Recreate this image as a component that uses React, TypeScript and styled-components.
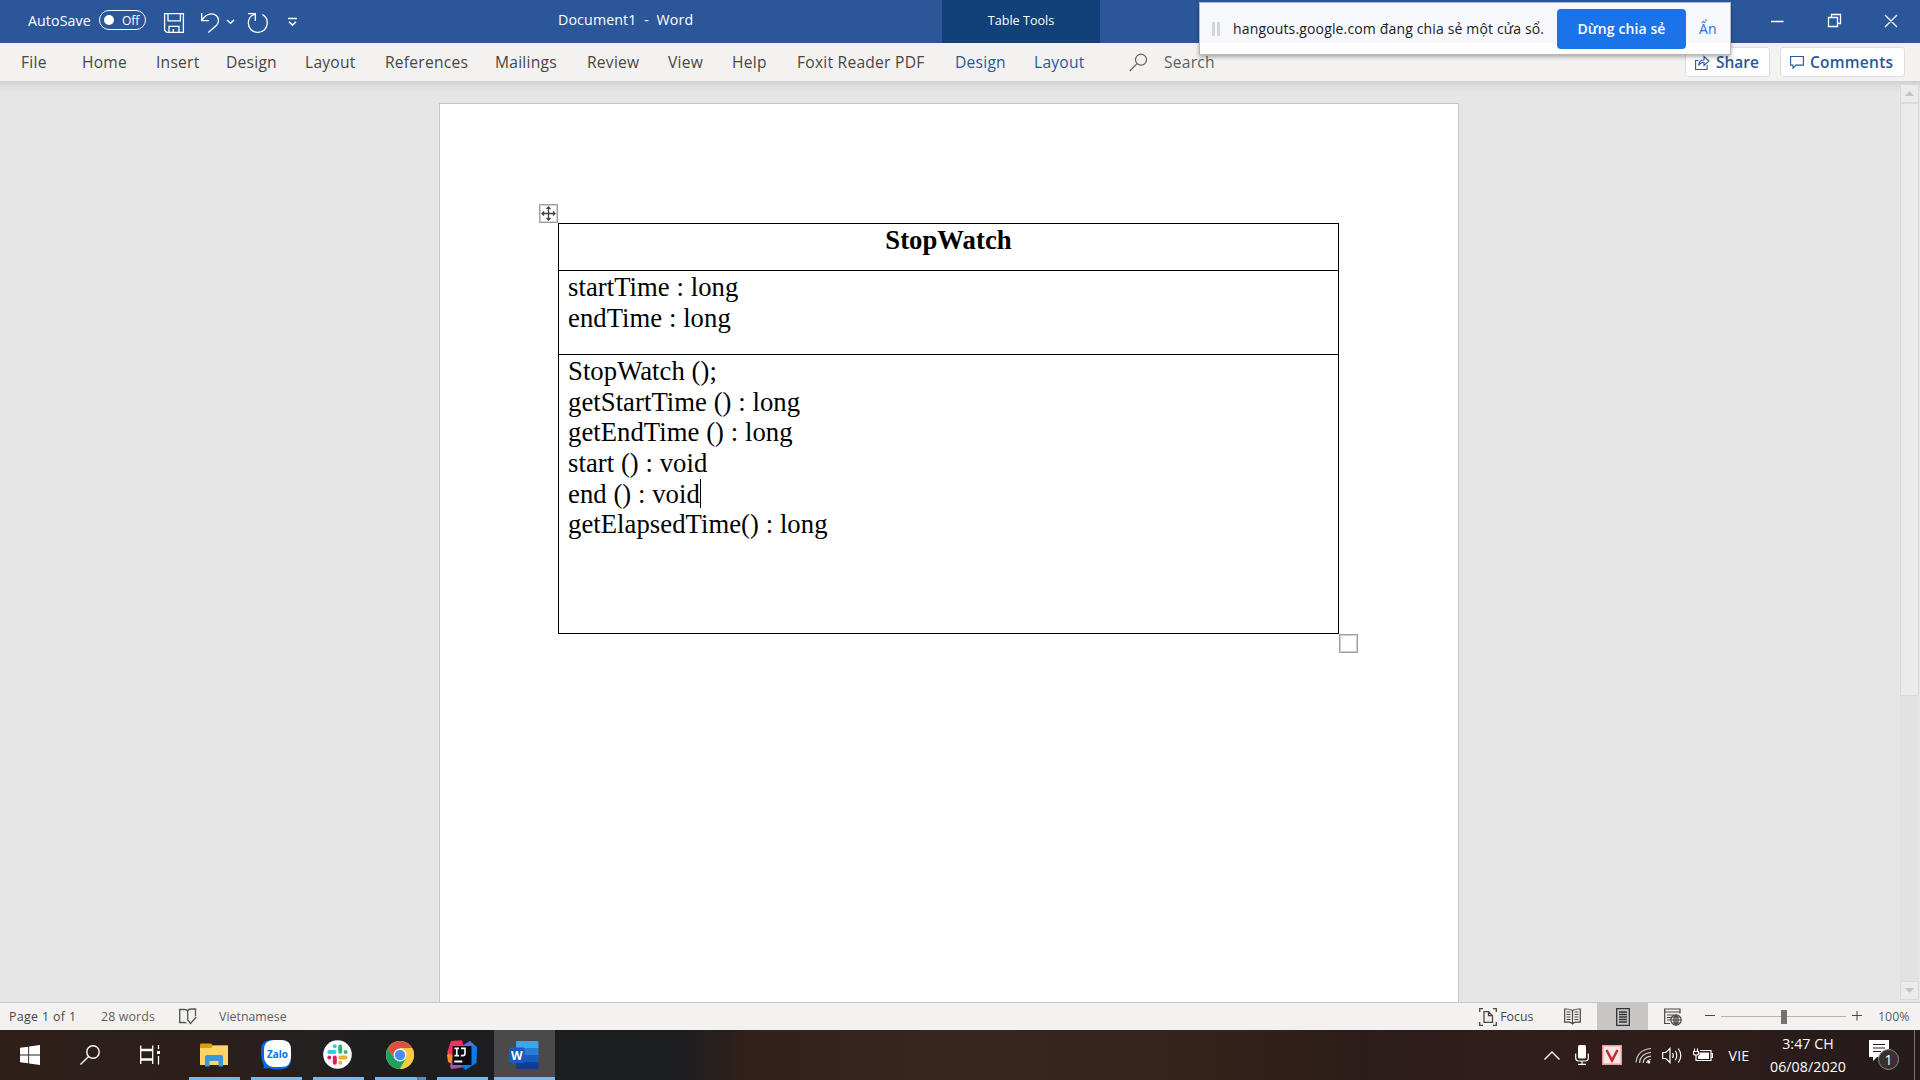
import React from "react";
import styled, { createGlobalStyle } from "styled-components";

const ui = `"Open Sans", "Noto Sans", sans-serif`;

const Global = createGlobalStyle`
  *, *::before, *::after { box-sizing: border-box; }
  body { margin: 0; overflow: hidden; background: #e6e6e6; }
  svg { display: block; flex: none; }
`;

const Screen = styled.div`
  position: relative;
  display: flex;
  flex-direction: column;
  width: 1920px;
  height: 1080px;
  overflow: hidden;
  font-family: ${ui};
  white-space: pre;
`;

const TitleBar = styled.header`
  display: flex;
  height: 43px;
  flex: none;
  background: #2b579a;
  color: #fff;
`;

const Text = styled.span<{ $size: number; $spacing?: number; $color?: string; $weight?: number }>`
  font-size: ${(p) => p.$size}px;
  letter-spacing: ${(p) => p.$spacing ?? 0}px;
  color: ${(p) => p.$color ?? "inherit"};
  font-weight: ${(p) => p.$weight ?? 400};
`;

const QuickAccess = styled.div`
  display: flex;
  align-items: center;
  width: 558px;
  padding: 0 0 1px 28px;
`;

const AutoSaveLabel = styled.div`
  width: 71px;
  padding-bottom: 2px;
`;

const Toggle = styled.div`
  display: flex;
  align-items: center;
  width: 47px;
  height: 20px;
  margin-top: -2px;
  padding-left: 4px;
  gap: 8px;
  border: 1px solid #fff;
  border-radius: 10px;
`;

const Knob = styled.i`
  width: 10px;
  height: 10px;
  border-radius: 50%;
  background: #fff;
`;

const QuickIcons = styled.div`
  display: flex;
  margin: 3px 0 0 17px;
`;

const DocTitle = styled.div`
  width: 384px;
  height: 39px;
  line-height: 39px;
`;

const ContextTab = styled.div`
  width: 158px;
  background: #124078;
  text-align: center;
  line-height: 38px;
`;

const WindowButtons = styled.div`
  display: flex;
  margin-left: 668px;
`;

const Ribbon = styled.nav`
  display: flex;
  align-items: center;
  flex: none;
  height: 38px;
  padding-left: 21px;
  background: #f3f2f1;
`;

const Tab = styled.div<{ $w: number; $blue?: boolean; $muted?: boolean }>`
  width: ${(p) => p.$w}px;
  flex: none;
  font-size: 15.6px;
  line-height: 38px;
  letter-spacing: 0.24px;
  color: ${(p) => (p.$blue ? "#2b579a" : p.$muted ? "#605e5c" : "#484644")};
`;

const RibbonButton = styled.div<{ $w: number }>`
  display: flex;
  align-items: center;
  gap: 6px;
  width: ${(p) => p.$w}px;
  height: 30px;
  margin-right: 10px;
  padding-left: 9px;
  border: 1px solid #e1dfdd;
  border-radius: 3px;
  background: #fff;
`;

const Workspace = styled.main`
  display: flex;
  flex: none;
  height: 921px;
  padding-left: 439px;
  background: linear-gradient(#cfcfcf, #e0e0e0 6px, #e6e6e6 12px);
`;

const Page = styled.article`
  width: 1020px;
  margin-top: 22px;
  padding: 119px 0 0 118px;
  border: 1px solid #c6c6c6;
  border-bottom: 0;
  background: #fff;
`;

const ClassTable = styled.section`
  position: relative;
  display: grid;
  grid-template-rows: 46px 83px 278px;
  row-gap: 1px;
  width: 781px;
  height: 411px;
  border: 1px solid #000;
  background: #000;
  font: 26.67px/30.67px "Liberation Serif", "Times New Roman", serif;
  letter-spacing: 0.06px;
  color: #000;
`;

const Cell = styled.div<{ $center?: boolean }>`
  padding: ${(p) => (p.$center ? "1px 0 0" : "1px 0 0 9px")};
  background: #fff;
  text-align: ${(p) => (p.$center ? "center" : "left")};
  font-weight: ${(p) => (p.$center ? 700 : 400)};
`;

const Line = styled.div`
  display: flex;
  height: 30.67px;
`;

const Caret = styled.i`
  width: 1px;
  height: 29px;
  background: #000;
`;

const MoveHandle = styled.div`
  position: absolute;
  left: -20px;
  top: -20px;
  width: 19px;
  height: 19px;
  border: 1px solid #a0a0a0;
  box-shadow: inset 0 0 0 1px #d0d0d0;
  background: #fff;
`;

const ResizeHandle = styled.div`
  position: absolute;
  left: 780px;
  top: 410px;
  width: 19px;
  height: 19px;
  border: 1px solid #a0a0a0;
  box-shadow: inset 0 0 0 1px #d0d0d0;
  background: #fff;
`;

const ScrollTrack = styled.aside`
  display: flex;
  flex-direction: column;
  width: 19px;
  height: 916px;
  margin: 3px 1px 0 auto;
  background: #e2e2e2;
`;

const ScrollPart = styled.div<{ $h: number; $push?: boolean }>`
  display: flex;
  align-items: center;
  justify-content: center;
  flex: none;
  height: ${(p) => p.$h}px;
  margin-top: ${(p) => (p.$push ? "auto" : 0)};
  border: 1px solid #dadada;
  background: #ebebeb;
`;

const StatusBar = styled.footer`
  display: flex;
  align-items: center;
  flex: none;
  height: 28px;
  padding-left: 9px;
  border-top: 1px solid #c8c6c4;
  background: #f3f2f1;
  color: #484644;
`;

const StatusItem = styled.div<{ $w: number }>`
  display: flex;
  align-items: center;
  flex: none;
  width: ${(p) => p.$w}px;
`;

const ViewButton = styled.div<{ $active?: boolean; $w?: number }>`
  display: flex;
  align-items: center;
  justify-content: center;
  flex: none;
  width: ${(p) => p.$w ?? 50}px;
  height: 27px;
  background: ${(p) => (p.$active ? "#c8c6c4" : "transparent")};
`;

const ZoomGroup = styled.div`
  display: flex;
  align-items: center;
  flex: none;
  margin: 0 16px 0 7px;
`;

const ZoomRail = styled.div`
  display: flex;
  align-items: center;
  flex: none;
  width: 125px;
  height: 1px;
  margin: 0 6px;
  padding-left: 60px;
  background: #b5b3b1;
`;

const ZoomThumb = styled.i`
  width: 6px;
  height: 14px;
  background: #767472;
`;

const Taskbar = styled.footer`
  display: flex;
  flex: none;
  height: 50px;
  background: linear-gradient(90deg, #2e1f19 0, #2c1f1a 200px, #242020 300px, #1e1e1f 380px, #1d1e20 680px, #33201b 755px, #38261f 950px, #36231c 1150px, #2f1f19 1330px, #2b1c1b 1360px, #321e1c 1520px, #2c1c1a 1750px, #241c1b 1920px);
  color: #fff;
`;

const SystemButton = styled.div`
  display: flex;
  align-items: center;
  justify-content: center;
  width: 60px;
`;

const Apps = styled.div`
  display: flex;
  gap: 11px;
  padding-left: 9px;
`;

const AppButton = styled.div<{ $active?: boolean; $stack?: boolean }>`
  display: flex;
  align-items: center;
  justify-content: center;
  flex: none;
  width: ${(p) => (p.$active ? 61 : 51)}px;
  margin-left: ${(p) => (p.$active ? -5 : 0)}px;
  padding: 2px 2px 0 0;
  border-bottom: 3px solid #76b9ed;
  border-image: ${(p) => (p.$stack ? "linear-gradient(90deg, #76b9ed 40px, #4b7596 40px, #5c8db5 42px) 3" : "none")};
  background: ${(p) => (p.$active ? "#4a4a4b" : "transparent")};
`;

const Tray = styled.div`
  display: flex;
  align-items: center;
  margin-left: auto;
`;

const TrayItem = styled.div<{ $w: number }>`
  display: flex;
  align-items: center;
  justify-content: center;
  flex: none;
  width: ${(p) => p.$w}px;
  height: 50px;
`;

const Clock = styled.div`
  width: 90px;
  margin-left: 4px;
  text-align: center;
  line-height: 23px;
`;

const PeekEdge = styled.div`
  width: 6px;
  height: 50px;
  border-left: 1px solid #767170;
`;

const SharePopup = styled.div`
  position: absolute;
  left: 1199px;
  top: 2px;
  display: flex;
  align-items: center;
  width: 532px;
  height: 53px;
  padding-left: 12px;
  border: 1px solid #b4b9c2;
  border-top-color: #a9bad6;
  background: linear-gradient(#f6f8fc 40px, #fefefe 40px);
  box-shadow: 0 2px 4px rgba(0, 0, 0, 0.3);
  color: #202124;
`;

const Grip = styled.div`
  display: flex;
  gap: 2px;
  width: 21px;
  i { width: 3px; height: 14px; background: #d2d4d8; }
`;

const Message = styled.div`
  width: 324px;
  padding-bottom: 1px;
`;

const StopButton = styled.div`
  width: 129px;
  height: 40px;
  border-radius: 4px;
  background: #1a73e8;
  line-height: 39px;
  text-align: center;
`;

const HideLink = styled.div`
  margin-left: 13px;
  padding-bottom: 1px;
`;

type TabInfo = { label: string; width: number; blue?: boolean };

const tabs: TabInfo[] = [
  { label: "File", width: 61 },
  { label: "Home", width: 74 },
  { label: "Insert", width: 70 },
  { label: "Design", width: 79 },
  { label: "Layout", width: 80 },
  { label: "References", width: 110 },
  { label: "Mailings", width: 92 },
  { label: "Review", width: 81 },
  { label: "View", width: 64 },
  { label: "Help", width: 65 },
  { label: "Foxit Reader PDF", width: 158 },
  { label: "Design", width: 79, blue: true },
  { label: "Layout", width: 95, blue: true },
];

const QuickAccessIcons = () => (
  <svg width="140" height="24" viewBox="163 11 140 24" fill="none" stroke="#fff" strokeWidth="1.3">
    <path d="M164.600 13.600h18.800v18.800h-16.600l-2.200-2.200zM168 13.600v7.200h12.400v-7.200M169 32.400v-6h10v6M173.200 29v3.400" />
    <path d="M201.700 13v7.600h7.500M202 20.200c2-3.400 5-6.400 9.300-6.400 4.300 0 7.200 3.100 7.200 6.800 0 2-.8 3.500-2.200 5l-8 7" />
    <path d="m227 20 3.500 3.300 3.500-3.300" strokeWidth="1.5" />
    <path d="M248 13.700h7.300v7.400M254.700 14.300c-4 1-6.400 4.700-6.400 8.700 0 5.300 4.200 9.400 9.500 9.400s9.500-4.100 9.500-9.400c0-3.800-1.900-6.900-5-8.500" />
    <path d="M288 18.600h9M289 21.800l3.500 3.300 3.500-3.300" strokeWidth="1.5" />
  </svg>
);

const WindowIcons = () => (
  <svg width="140" height="43" viewBox="1768 0 140 43" fill="none" stroke="#fff" strokeWidth="1.3">
    <path d="M1771 21.500h12.500M1828.500 17.500h9v9h-9zM1831.500 17.500v-3h9v9h-3M1885 15l12 12M1897 15l-12 12" />
  </svg>
);

const StartIcon = () => (
  <svg width="20" height="20" viewBox="0 0 20 20" fill="#fff">
    <path d="M0 2.800 8.200 1.700v7.900H0zM9.100 1.500 20 0v9.600H9.100zM0 10.400h8.200v7.900L0 17.200zM9.100 10.400H20V20L9.100 18.500z" />
  </svg>
);

const ExplorerIcon = () => (
  <svg width="28" height="24" viewBox="0 0 28 24">
    <path d="M0 1.500Q0 .5 1 .5h10l2 2h14q1 0 1 1V22H0z" fill="#e09c0c" />
    <path d="M0 5h11l2.500-2.500H28V22H0z" fill="#ffd563" />
    <path d="M5 23.500V14q0-2 2-2h14q2 0 2 2v9.500h-4.500V18h-9v5.500z" fill="#3a96dd" />
  </svg>
);

const ZaloIcon = () => (
  <svg width="30" height="30" viewBox="0 0 30 30">
    <path d="M10 0h10q10 0 10 10v9q0 10.500-12 10.500-6 .5-10-1.500l-5 .5q-1-.5 0-3Q0 21 0 10 0 0 10 0z" fill="#0866e8" />
    <path d="M13 0h8q9 0 9 10v7q0 10-10 10h-7q-4 0-6-2-4-3-4-9v-6Q3 0 13 0z" fill="#fff" />
    <text x="16.500" y="17.500" textAnchor="middle" fontFamily={ui} fontSize="10.500" fontWeight="700" fill="#0872e8" textLength="21" lengthAdjust="spacingAndGlyphs">Zalo</text>
  </svg>
);

const SlackIcon = () => (
  <svg width="29" height="29" viewBox="0 0 29 29">
    <circle cx="14.500" cy="14.500" r="14.300" fill="#fff" />
    <g strokeWidth="4" strokeLinecap="round">
      <path d="M6.300 12h5.200M11.800 6.300h.01" stroke="#36c5f0" />
      <path d="M17.200 6.500v5.300M22.600 12h.01" stroke="#2eb67d" />
      <path d="M17.300 17.400h5.300M17.300 22.700h.01" stroke="#ecb22e" />
      <path d="M11.800 17.400v5.300M6.300 17.400h.01" stroke="#e01e5a" />
    </g>
  </svg>
);

const ChromeIcon = () => (
  <svg width="28" height="28" viewBox="0 0 28 28">
    <circle cx="14" cy="14" r="14" fill="#fdca42" />
    <path d="M1.900 7A14 14 0 0 1 26.100 7H14l-6 10.500z" fill="#dd5144" />
    <path d="M1.900 7A14 14 0 0 0 14 28l6-10.500H8z" fill="#1ca261" />
    <path d="M26.100 7H14v7l6 3.500L14 28A14 14 0 0 0 26.100 7z" fill="#fdca42" />
    <circle cx="14" cy="14" r="6.400" fill="#fff" />
    <circle cx="14" cy="14" r="5.200" fill="#4a8cf6" />
  </svg>
);

const IntellijIcon = () => (
  <svg width="30" height="30" viewBox="0 0 30 30">
    <path d="m0 15 3-5 8 12-4 3-6-3z" fill="#f98a2b" />
    <path d="m4 1 11-.7L17 9 7 16 0 13z" fill="#fe2d63" />
    <path d="m6 17 12 10-14 2-1-3z" fill="#a857a7" />
    <path d="m15 6 8-5 7 6-.5 16-11 7-6-6z" fill="#0b7bf2" />
    <path d="m15 6 8-5 4 4-6 7z" fill="#5f6adb" />
    <path d="M5.500 6h19v19h-19z" fill="#0c0c0e" />
    <path d="M7.500 8.400h4.500M9.750 8.400v7.200M7.500 15.600h4.500M14 8.400h4v4.800q0 2.400-2.400 2.400h-1.800" fill="none" stroke="#fff" strokeWidth="1.6" />
    <path d="M7.300 20.500h8V22.500h-8z" fill="#fff" />
  </svg>
);

const WordIcon = () => (
  <svg width="30" height="28" viewBox="0 0 30 28">
    <path d="M7 1q0-1 1-1h20q1.500 0 1.500 1.500V7H7z" fill="#41a5ee" />
    <path d="M7 7h22.500v7H7z" fill="#2b7cd3" />
    <path d="M7 14h22.500v7H7z" fill="#185abd" />
    <path d="M7 21h22.500v5.500Q29.500 28 28 28H8q-1 0-1-1z" fill="#103f91" />
    <rect x="0" y="6.500" width="15.500" height="15.500" rx="1.300" fill="#185abd" />
    <text x="7.700" y="18.500" textAnchor="middle" fontFamily={ui} fontSize="12" fontWeight="700" fill="#fff">W</text>
  </svg>
);

export default function App() {
  return (
    <>
      <Global />
      <Screen>
        <TitleBar>
          <QuickAccess>
            <AutoSaveLabel><Text $size={14.2} $spacing={0.1}>AutoSave</Text></AutoSaveLabel>
            <Toggle><Knob /><Text $size={12}>Off</Text></Toggle>
            <QuickIcons><QuickAccessIcons /></QuickIcons>
          </QuickAccess>
          <DocTitle><Text $size={14.2} $spacing={0.14}>Document1  -  Word</Text></DocTitle>
          <ContextTab><Text $size={12.6}>Table Tools</Text></ContextTab>
          <WindowButtons><WindowIcons /></WindowButtons>
        </TitleBar>

        <Ribbon>
          {tabs.map((tab, i) => (
            <Tab key={i} $w={tab.width} $blue={tab.blue}>{tab.label}</Tab>
          ))}
          <StatusItem $w={35}>
            <svg width="19" height="19" viewBox="0 0 19 19" fill="none" stroke="#605e5c" strokeWidth="1.2">
              <circle cx="12" cy="6.700" r="5.500" /><path d="M8 10.700.8 18" />
            </svg>
          </StatusItem>
          <Tab $w={521} $muted>Search</Tab>
          <RibbonButton $w={85}>
            <svg width="15" height="15" viewBox="0 0 15 15" fill="none" stroke="#2b579a" strokeWidth="1.1">
              <path d="M3.500 5.500H.6v9h11.500V10M3.500 10.500c.5-4 3-5.500 5.500-5.500V1.500l5 4.500-5 4.500V7.300c-2.500 0-4 1-5.500 3.200z" />
            </svg>
            <Text $size={15.5} $weight={600} $color="#2b579a">Share</Text>
          </RibbonButton>
          <RibbonButton $w={125}>
            <svg width="14" height="15" viewBox="0 0 14 15" fill="none" stroke="#2b579a" strokeWidth="1.1">
              <path d="M.6 1.500h12.800v8.600H6l-3 3v-3H.6z" />
            </svg>
            <Text $size={15.5} $spacing={0.25} $weight={600} $color="#2b579a">Comments</Text>
          </RibbonButton>
        </Ribbon>

        <Workspace>
          <Page>
            <ClassTable>
              <Cell $center>StopWatch</Cell>
              <Cell><Line>startTime : long</Line><Line>endTime : long</Line></Cell>
              <Cell>
                <Line>StopWatch ();</Line>
                <Line>getStartTime () : long</Line>
                <Line>getEndTime () : long</Line>
                <Line>start () : void</Line>
                <Line>end () : void<Caret /></Line>
                <Line>getElapsedTime() : long</Line>
              </Cell>
              <MoveHandle>
                <svg width="17" height="17" viewBox="0 0 17 17" fill="none" stroke="#444" strokeWidth="1.3">
                  <path d="M8.500 2v13M2 8.500h13M6.500 4l2-2 2 2M6.500 13l2 2 2-2M4 6.500l-2 2 2 2M13 6.500l2 2-2 2" />
                </svg>
              </MoveHandle>
              <ResizeHandle />
            </ClassTable>
          </Page>
          <ScrollTrack>
            <ScrollPart $h={19}><svg width="9" height="5"><path d="M0 5 4.500 0 9 5z" fill="#c4c4c4" /></svg></ScrollPart>
            <ScrollPart $h={593} />
            <ScrollPart $h={19} $push><svg width="9" height="5"><path d="M0 0h9L4.500 5z" fill="#c4c4c4" /></svg></ScrollPart>
          </ScrollTrack>
        </Workspace>

        <StatusBar>
          <StatusItem $w={92}><Text $size={12.4} $spacing={0.35}>Page 1 of 1</Text></StatusItem>
          <StatusItem $w={78}><Text $size={12.4} $spacing={0.12} $color="#605e5c">28 words</Text></StatusItem>
          <StatusItem $w={40}>
            <svg width="18" height="17" viewBox="0 0 18 17" fill="none" stroke="#555" strokeWidth="1.3">
              <path d="M6 14.500H.7V1.500h4.500q3 0 3.500 1.500Q9.500 1 12 1h4.500v7M8.700 3v8M6 14.500l1.500.8M8 11l3.500 4.500L17.300 9" />
            </svg>
          </StatusItem>
          <StatusItem $w={1260}><Text $size={12.4} $color="#605e5c">Vietnamese</Text></StatusItem>
          <StatusItem $w={69}>
            <svg width="18" height="18" viewBox="0 0 18 18" fill="none" stroke="#484644" strokeWidth="1.3">
              <path d="M.7 4V.7H4M14 .7h3.300V4M.7 14v3.300H4M14 17.300h3.300V14M5 3.700h4.500l4 4v6.600H5zM9.500 3.700v4h4" />
            </svg>
            <Text $size={12.4}> Focus</Text>
          </StatusItem>
          <ViewButton $w={49}>
            <svg width="17" height="17" viewBox="0 0 17 17" fill="none" stroke="#484644" strokeWidth="1.2">
              <path d="M8.500 2.500v14M8.500 2.500Q6 .8 .7 1v13.200h5l2.800 1.300 2.800-1.300h5V1Q11 .8 8.500 2.500zM2.500 4h4M2.500 6.500h4M2.500 9h4M2.500 11.500h4M10.500 4h4M10.500 6.500h4M10.500 9h4M10.500 11.500h4" />
            </svg>
          </ViewButton>
          <ViewButton $active $w={51}>
            <svg width="14" height="18" viewBox="0 0 14 18" fill="none" stroke="#333" strokeWidth="1.3">
              <path d="M.7.700h12.600v16.600H.7zM3 4h8M3 6.500h8M3 9h8M3 11.500h8M3 14h8" />
            </svg>
          </ViewButton>
          <ViewButton>
            <svg width="18" height="18" viewBox="0 0 18 18" fill="none" stroke="#484644" strokeWidth="1.2">
              <path d="M16 5.500V1H.7v14.500H6M.7 4H16M3 7h7M3 9.500h4M3 12h3" />
              <circle cx="12" cy="12" r="5.200" fill="#f3f2f1" />
              <path d="M6.800 12h10.400M12 6.800v10.400M8 9h8M8 15h8M12 6.800q-4.500 5 0 10.400M12 6.800q4.500 5 0 10.400" />
            </svg>
          </ViewButton>
          <ZoomGroup>
            <svg width="10" height="11"><path d="M0 4.500h10" stroke="#484644" /></svg>
            <ZoomRail><ZoomThumb /></ZoomRail>
            <svg width="10" height="11"><path d="M0 4.500h10M5 -.5v10" stroke="#484644" /></svg>
          </ZoomGroup>
          <Text $size={12.4} $color="#605e5c">100%</Text>
        </StatusBar>

        <Taskbar>
          <SystemButton><StartIcon /></SystemButton>
          <SystemButton>
            <svg width="20" height="20" viewBox="0 0 20 20" fill="none" stroke="#fff" strokeWidth="1.4">
              <circle cx="13" cy="7" r="6.200" /><path d="M8.600 11.400.5 19.500" />
            </svg>
          </SystemButton>
          <SystemButton>
            <svg width="20" height="20" viewBox="0 0 20 20" fill="none" stroke="#fff" strokeWidth="1.3">
              <path d="M.7.500v3.800h12V.5M.7 19v-3.800h12V19M.7 5.500h12v8.500H.7zM18.500 0v4M18.500 11v8.500" /><path d="M17 6h3v3h-3z" fill="#fff" stroke="none" />
            </svg>
          </SystemButton>
          <Apps>
            <AppButton><ExplorerIcon /></AppButton>
            <AppButton><ZaloIcon /></AppButton>
            <AppButton><SlackIcon /></AppButton>
            <AppButton $stack><ChromeIcon /></AppButton>
            <AppButton><IntellijIcon /></AppButton>
            <AppButton $active><WordIcon /></AppButton>
          </Apps>
          <Tray>
            <TrayItem $w={32}><svg width="16" height="9"><path d="M.5 8.500 8 1l7.500 7.500" fill="none" stroke="#fff" strokeWidth="1.4" /></svg></TrayItem>
            <TrayItem $w={27}>
              <svg width="14" height="20" viewBox="0 0 14 20"><rect x="3" width="8" height="13.500" rx="1.500" fill="#fff" /><path d="M.7 8.500V13q0 3 3 3h6.600q3 0 3-3V8.500M7 16v3.300M3 19.300h8" fill="none" stroke="#fff" strokeWidth="1.2" /></svg>
            </TrayItem>
            <TrayItem $w={34}>
              <svg width="20" height="20" viewBox="0 0 20 20"><path d="M0 0h20v20H0z" fill="#ef9a9a" /><path d="M1.500 1.500h17v17h-17z" fill="#f7e9e8" /><path d="M4.500 5 10 15.500 15.500 5" fill="none" stroke="#c4282c" strokeWidth="2.5" /></svg>
            </TrayItem>
            <TrayItem $w={28}>
              <svg width="17" height="17" viewBox="0 0 17 17" fill="none" stroke="#ccc" strokeWidth="1.2"><path d="M1 15.500Q2 3 16 1.500M4.500 16Q5 6.500 16 5.300M8 16Q8.500 10 16 9.200M11.500 16q.5-3 4.500-3.500" /><circle cx="13.800" cy="15" r="1.500" fill="#fff" stroke="none" /></svg>
            </TrayItem>
            <TrayItem $w={30}>
              <svg width="20" height="17" viewBox="0 0 20 17" fill="none" stroke="#fff" strokeWidth="1.2"><path d="M.7 5.500h3L8 1.500v14l-4.300-4h-3zM10.500 6q1.500 2.500 0 5M13.300 3.800q3 4.700 0 9.400M16.300 1.500q5 7 0 14" /></svg>
            </TrayItem>
            <TrayItem $w={32}>
              <svg width="20" height="14" viewBox="0 0 20 14"><path d="M1.500.5V3M4.500.5V3M.5 3.500h5v2q0 1.500-2.500 1.500T.5 5.500zM3 7v5.500h15V2.500H7M18.500 5.500h1v4h-1" fill="none" stroke="#fff" strokeWidth="1.2" /><path d="M6.500 4.500H16v6.500H5V8l1.500-1z" fill="#fff" /></svg>
            </TrayItem>
            <TrayItem $w={40}><Text $size={14.2} $spacing={0.2}>VIE</Text></TrayItem>
            <Clock><Text $size={14.2} $spacing={0.08}>3:47 CH{"\n"}06/08/2020</Text></Clock>
            <TrayItem $w={61}>
              <svg width="32" height="32" viewBox="0 0 32 32"><path d="M1 1h20v17H9l-4 4v-4H1z" fill="#fff" /><path d="M5 5.500h12M5 9h12M5 12.500h8" stroke="#2c1e1c" strokeWidth="1.2" /><circle cx="20.500" cy="20.500" r="10" fill="#38312f" stroke="#8d8987" /><text x="20.500" y="25.500" textAnchor="middle" fontFamily={ui} fontSize="14" fill="#fff">1</text></svg>
            </TrayItem>
            <PeekEdge />
          </Tray>
        </Taskbar>

        <SharePopup>
          <Grip><i /><i /></Grip>
          <Message><Text $size={14} $spacing={0.15}>hangouts.google.com đang chia sẻ một cửa sổ.</Text></Message>
          <StopButton><Text $size={14} $spacing={0.1} $weight={600} $color="#fff">Dừng chia sẻ</Text></StopButton>
          <HideLink><Text $size={14} $spacing={0.1} $color="#1a73e8">Ẩn</Text></HideLink>
        </SharePopup>
      </Screen>
    </>
  );
}
